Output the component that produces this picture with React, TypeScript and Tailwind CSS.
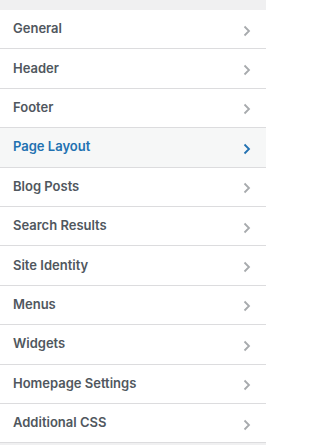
import React from "react";

const items = [
  "General",
  "Header",
  "Footer",
  "Page Layout",
  "Blog Posts",
  "Search Results",
  "Site Identity",
  "Menus",
  "Widgets",
  "Homepage Settings",
  "Additional CSS",
];

function Chevron({ active }: { active: boolean }) {
  return (
    <svg width="8" height="12" viewBox="0 0 8 12" className="shrink-0">
      <polyline
        points="1.5,1.5 6,6 1.5,10.5"
        fill="none"
        stroke={active ? "#2271b1" : "#a7aaad"}
        strokeWidth="1.8"
        strokeLinecap="butt"
        strokeLinejoin="miter"
      />
    </svg>
  );
}

export default function App() {
  return (
    <div
      className="w-[266px] h-[445px] bg-[#f0f0f1] overflow-hidden"
      style={{ fontFamily: 'Inter, "Liberation Sans", Arial, sans-serif' }}
    >
      <div className="h-[10px]" />
      <div className="bg-white">
        {items.map((label) => {
          const active = label === "Page Layout";
          return (
            <div
              key={label}
              className={`h-[39.4px] box-border border-b border-[#dcdcde] flex items-center justify-between pl-[13px] pr-[15px] ${
                active ? "bg-[#f6f7f7]" : "bg-white"
              }`}
            >
              <span
                className={`text-[13px] font-semibold leading-none -mt-[1px] ${
                  active ? "text-[#2271b1]" : "text-[#50575e]"
                }`}
              >
                {label}
              </span>
              <span className="mt-[3px]">
                <Chevron active={active} />
              </span>
            </div>
          );
        })}
      </div>
    </div>
  );
}
